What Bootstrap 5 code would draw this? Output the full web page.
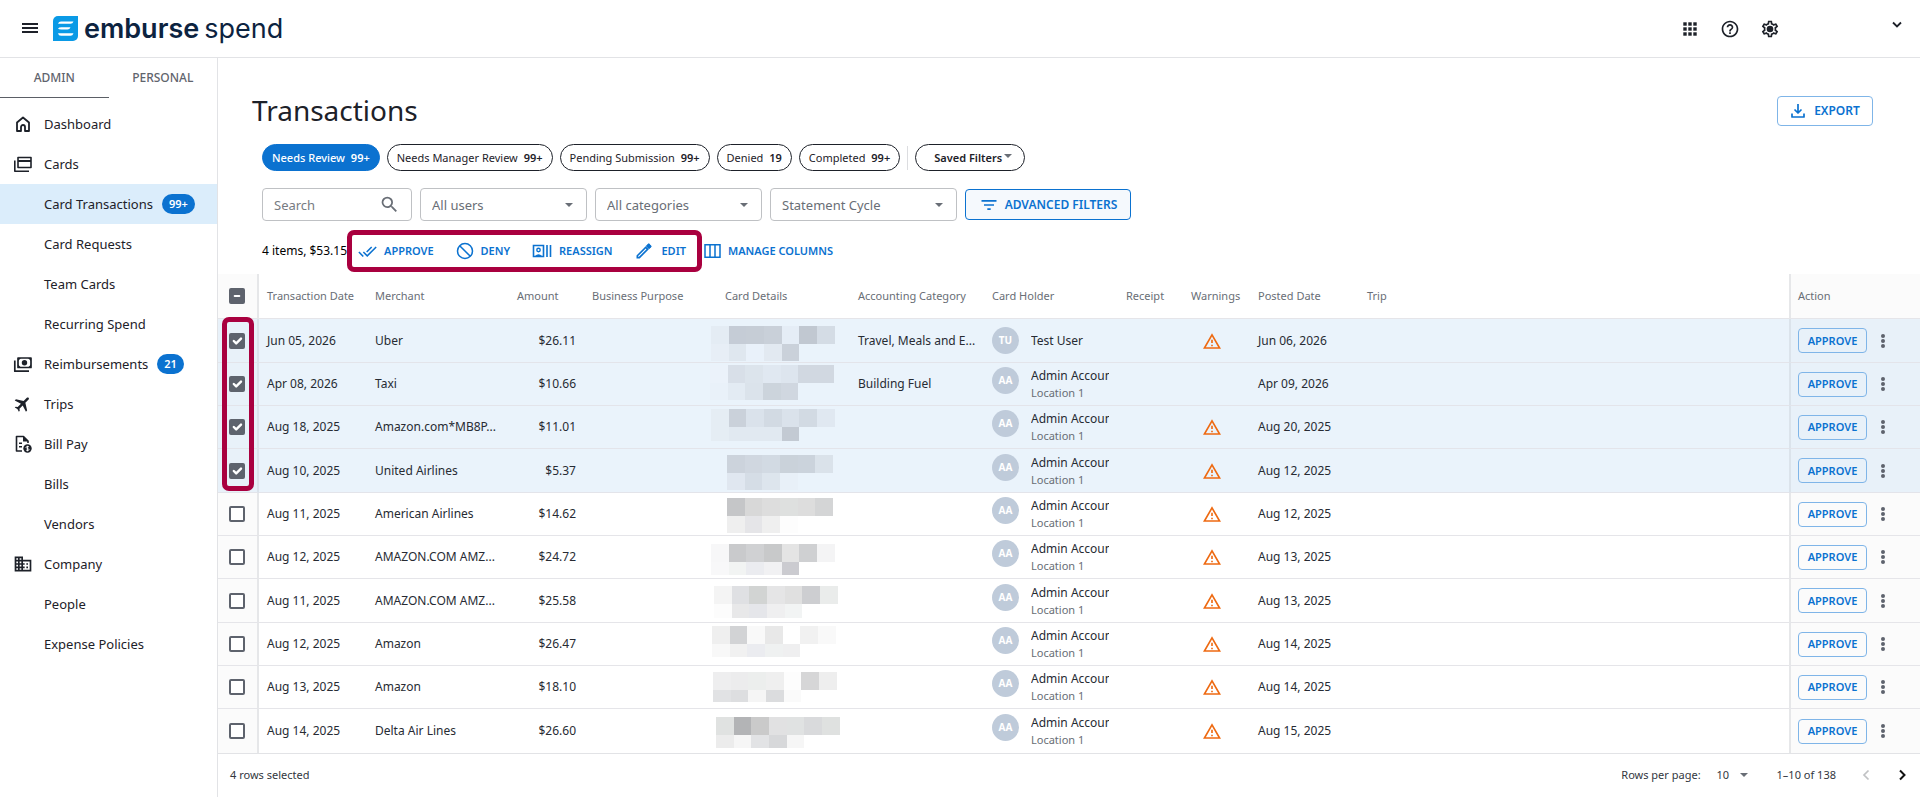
<!DOCTYPE html>
<html lang="en">
<head>
<meta charset="utf-8">
<meta name="viewport" content="width=device-width, initial-scale=1">
<title>Transactions - Emburse Spend</title>
<link rel="stylesheet" href="https://cdn.jsdelivr.net/npm/bootstrap@5.3.0/dist/css/bootstrap.min.css">
<style>
  :root { --brand: #0b72d0; --ink: #1d2129; --muted: #696e76; --rule: #e2e3e6; --mark: #a9003f; }
  body { font-family: "Noto Sans", sans-serif; font-size: 13px; line-height: 20px; color: var(--ink); background: #fff; }
  svg { display: block; flex: none; fill: currentColor; }
  .icon-btn { padding: 0; border: 0; background: none; color: inherit; }

  .app-bar { height: 58px; border-bottom: 1px solid var(--rule); padding: 0 17px 0 20px; }
  .wordmark { font-family: Inter, sans-serif; font-size: 27px; line-height: 32px; color: #0c2340; gap: 5px; margin-left: 6px; }
  .tools { gap: 20px; margin-right: 111px; }

  .side { width: 218px; border-right: 1px solid var(--rule); flex: none; }
  .side-tabs { height: 40px; margin-bottom: 6px; }
  .side-tabs a { font-size: 12px; font-weight: 500; color: #5f646d; border-bottom: 1px solid transparent; }
  .side-tabs a.active { border-color: #5b5f66; }
  .side-link { height: 40px; padding-left: 13px; color: var(--ink); text-decoration: none; }
  .side-link svg, .side-link .no-icon { width: 20px; height: 20px; margin-right: 11px; flex: none; }
  .side-link.active { background: #dbedfb; }
  .count { background: var(--brand); color: #fff; font-size: 11px; font-weight: 600; line-height: 20px; border-radius: 10px; padding: 0 7px; margin-left: 9px; }

  .top-area { padding: 37px 47px 0 44px; }
  h1 { font-size: 28px; line-height: 31px; font-weight: 400; margin: 0 0 0 -10px; }
  .action-btn { color: var(--brand); border: 1px solid #7fb5e8; border-radius: 4px; background: none; font-weight: 600; font-size: 12px; display: inline-flex; align-items: center; justify-content: center; padding: 0; }
  .btn-export { height: 30px; width: 96px; gap: 8px; }
  .btn-adv { height: 31px; width: 166px; gap: 6px; font-size: 12px; background: #f5f9fd; border-color: var(--brand); }
  .btn-row { height: 25px; width: 69px; font-size: 11px; }

  .chips { gap: 7px; margin-top: 18px; }
  .chip { height: 27px; border: 1px solid #1d2129; border-radius: 14px; background: #fff; font-size: 11px; line-height: 16px; padding: 0 9px; color: var(--ink); white-space: nowrap; }
  .chip b { font-weight: 600; margin-left: 3px; }
  .chip.active { background: var(--brand); border-color: var(--brand); color: #fff; font-weight: 500; }
  .chip-rule { width: 1px; height: 24px; background: #dcdde0; }
  select.chip { appearance: none; font-weight: 600; width: 110px; padding: 0 0 0 18px;
    background: #fff url("data:image/svg+xml,%3Csvg xmlns='http://www.w3.org/2000/svg' viewBox='0 0 8 4'%3E%3Cpath fill='%23696e76' d='M0 0h8L4 4z'/%3E%3C/svg%3E") no-repeat right 12px top 9px / 8px 4px; }

  .filters { gap: 8px; margin-top: 17px; }
  .field { height: 33px; border: 1px solid #bfc1c4; border-radius: 4px; font-size: 13px; color: var(--muted); padding: 0 11px; background-color: #fff; }
  .field input { border: 0; outline: 0; width: 100%; min-width: 0; padding: 0; color: inherit; }
  .field input::placeholder { color: #777b82; opacity: 1; }
  .caret { appearance: none; background-image: url("data:image/svg+xml,%3Csvg xmlns='http://www.w3.org/2000/svg' viewBox='0 0 8 4'%3E%3Cpath fill='%23696e76' d='M0 0h8L4 4z'/%3E%3C/svg%3E"); background-repeat: no-repeat; background-position: right 13px center; background-size: 8px 4px; }
  .w-search { width: 150px; } .w-pick { width: 167px; } .w-cycle { width: 187px; }

  .bulk { margin: 9px 0 2px; gap: 2px; }
  .bulk-sum { font-size: 12px; color: #000; width: 83px; white-space: nowrap; }
  .marked { border: 5px solid var(--mark); border-radius: 7px; height: 42px; width: 355px; padding: 0 11px 0 6px; }
  .bulk .tool { color: var(--brand); border: 0; background: none; padding: 0; font-size: 11px; font-weight: 600; line-height: 16px; gap: 7px; display: inline-flex; align-items: center; white-space: nowrap; }

  .grid-wrap { position: relative; border-bottom: 1px solid var(--rule); }
  .grid { width: 100%; table-layout: fixed; border-collapse: separate; border-spacing: 0; font-size: 12px; line-height: 18px; color: #272b33; }
  .grid th { height: 45px; font-size: 11px; font-weight: 400; color: var(--muted); }
  .grid th, .grid td { padding: 0 8px; border-bottom: 1px solid #e5e5e9; white-space: nowrap; overflow: hidden; }
  .grid td { height: 43px; }
  .grid tbody tr:nth-child(3n+1) td { height: 44px; }
  .grid tbody tr:last-child td { border-bottom: 0; }
  .grid .pin-l { background: #fbfbfb; border-right: 2px solid #e6e7e9; padding: 0 0 0 11px; }
  .grid .pin-r { background: #fbfbfb; border-left: 2px solid #e6e7e9; padding-left: 7px; }
  .grid tr.picked td { background: #eaf3fb; border-bottom-color: #e3e4ea; }
  .grid tr.picked td.pin-l, .grid tr.picked td.pin-r { background: #e8f1f9; border-left-color: #dbe3eb; border-right-color: #dbe3eb; }
  .grid td.redacted { padding: 0; overflow: visible; }
  .redacted svg { width: 100%; height: 42px; overflow: visible; }
  .grid .form-check-input { display: block; margin: 0; width: 16px; height: 16px; border: 2px solid #5e636d; border-radius: 2px; box-shadow: none; }
  .grid .form-check-input:checked, .grid .form-check-input:indeterminate { background-color: #5e636d; border-color: #5e636d; }
  .grid .form-check-input:checked { background-size: 16px 16px; }
  .avatar { width: 27px; height: 27px; border-radius: 50%; background: #bfcbda; color: #fff; font-size: 10px; font-weight: 700; line-height: 27px; text-align: center; flex: none; margin-right: 12px; }
  .holder { width: 78px; overflow: hidden; }
  .holder .place { font-size: 11px; line-height: 16px; color: var(--muted); }
  .warn { color: #ee6a12; margin-left: 12px; }
  .kebab { margin-left: 14px; color: #5e636d; }
  .mark-checks { position: absolute; left: 4px; top: 43px; width: 32px; height: 174px; border: 5px solid var(--mark); border-radius: 7px; pointer-events: none; }

  .foot { height: 42px; padding: 0 12px; font-size: 11px; color: #33373e; }
  .foot select { border: 0; width: 44px; padding: 0; font-size: 11px; color: inherit; background-color: transparent; background-position: right 13px center; }
</style>
</head>
<body class="d-flex flex-column min-vh-100">

<svg width="0" height="0" class="position-absolute" aria-hidden="true">
  <symbol id="i-kebab" viewBox="0 0 4 14"><circle cx="2" cy="2" r="2"/><circle cx="2" cy="7" r="2"/><circle cx="2" cy="12" r="2"/></symbol>
  <symbol id="i-warn" viewBox="1 2 22 19"><path d="M12 5.99L19.53 19H4.47L12 5.99M12 2L1 21h22L12 2zm1 14h-2v2h2v-2zm0-6h-2v4h2v-4z"/></symbol>
</svg>

<header class="app-bar d-flex align-items-center">
  <button class="icon-btn" aria-label="Menu"><svg width="24" height="24" viewBox="0 0 24 24"><path d="M2 6h16v2H2zM2 10h16v2H2zM2 14h16v2H2z"/></svg></button>
  <a href="#" class="d-flex align-items-center text-decoration-none ms-2" aria-label="Emburse Spend">
    <svg width="26" height="26" viewBox="0 0 26 26"><path fill="#0a9ae6" d="M6 0h20v20a5 5 0 0 1-5 5H1V5a5 5 0 0 1 5-5z"/><path fill="#fff" d="M9 5.500h12.500q-.8 2.300-3 2.300H6q.7-2.300 3-2.300zM9.500 11.300h9q-.8 2.300-3 2.300h-6q-3 0-3.500-1 1-1.300 3.500-1.300zM6 17.200h15.500q-.8 2.500-3 2.500H9q-2.500 0-3-2.500z"/></svg>
    <span class="wordmark d-flex"><span class="fw-semibold">emburse</span><span>spend</span></span>
  </a>
  <div class="tools d-flex align-items-center ms-auto">
    <button class="icon-btn" aria-label="Apps"><svg width="20" height="20" viewBox="0 0 20 20"><path d="M3 3h4v4H3zM8 3h4v4H8zM13 3h4v4h-4zM3 8h4v4H3zM8 8h4v4H8zM13 8h4v4h-4zM3 13h4v4H3zM8 13h4v4H8zM13 13h4v4h-4z" stroke="#fff" stroke-width=".6"/></svg></button>
    <button class="icon-btn" aria-label="Help"><svg width="20" height="20" viewBox="0 0 24 24"><path d="M11 18h2v-2h-2v2zm1-16C6.480 2 2 6.480 2 12s4.480 10 10 10 10-4.480 10-10S17.520 2 12 2zm0 18c-4.410 0-8-3.590-8-8s3.590-8 8-8 8 3.590 8 8-3.590 8-8 8zm0-14c-2.210 0-4 1.790-4 4h2c0-1.100.9-2 2-2s2 .9 2 2c0 2-3 1.750-3 5h2c0-2.250 3-2.500 3-5 0-2.210-1.790-4-4-4z"/></svg></button>
    <button class="icon-btn" aria-label="Settings"><svg width="20" height="20" viewBox="0 0 24 24"><path d="M19.430 12.980c.04-.32.07-.64.07-.98 0-.34-.03-.66-.07-.98l2.110-1.650c.19-.15.24-.42.12-.64l-2-3.460c-.09-.16-.26-.25-.44-.25-.06 0-.12.010-.17.030l-2.490 1c-.52-.4-1.080-.73-1.690-.98l-.38-2.650C14.460 2.180 14.250 2 14 2h-4c-.25 0-.46.18-.49.42l-.38 2.650c-.61.25-1.170.59-1.690.98l-2.490-1c-.06-.02-.12-.03-.18-.03-.17 0-.34.09-.43.25l-2 3.460c-.13.22-.07.49.12.64l2.110 1.650c-.04.32-.07.65-.07.98 0 .33.030.66.07.98l-2.110 1.650c-.19.15-.24.42-.12.64l2 3.460c.09.16.26.25.44.25.06 0 .12-.01.17-.03l2.490-1c.52.4 1.080.73 1.690.98l.38 2.650c.03.24.24.42.49.42h4c.25 0 .46-.18.49-.42l.38-2.650c.61-.25 1.170-.59 1.690-.98l2.490 1c.06.02.12.030.18.030.17 0 .34-.09.43-.25l2-3.460c.12-.22.07-.49-.12-.64l-2.110-1.650zm-1.980-1.710c.04.31.05.52.05.73 0 .21-.02.43-.05.73l-.14 1.130.89.7 1.080.84-.7 1.210-1.270-.51-1.040-.42-.9.68c-.43.32-.84.56-1.250.73l-1.060.43-.16 1.130-.2 1.350h-1.400l-.19-1.350-.16-1.130-1.060-.43c-.43-.18-.83-.41-1.230-.71l-.91-.7-1.060.43-1.270.51-.7-1.210 1.080-.84.89-.7-.14-1.130c-.03-.31-.05-.54-.05-.74s.02-.43.05-.73l.14-1.130-.89-.7-1.080-.84.7-1.210 1.270.51 1.040.42.9-.68c.43-.32.84-.56 1.250-.73l1.060-.43.16-1.130.2-1.350h1.390l.19 1.350.16 1.130 1.060.43c.43.18.83.41 1.230.71l.91.7 1.060-.43 1.270-.51.7 1.210-1.070.85-.89.7.14 1.130z"/><circle cx="12" cy="12" r="4"/></svg></button>
  </div>
  <button class="icon-btn mb-2" aria-label="Account menu"><svg width="12" height="8" viewBox="0 0 12 8"><path d="M2 1.500l4 4 4-4" fill="none" stroke="currentColor" stroke-width="1.800"/></svg></button>
</header>

<div class="d-flex flex-grow-1">
  <aside class="side">
    <nav class="side-tabs d-flex">
      <a href="#" class="active w-50 d-flex align-items-center justify-content-center text-decoration-none">ADMIN</a>
      <a href="#" class="w-50 d-flex align-items-center justify-content-center text-decoration-none">PERSONAL</a>
    </nav>
    <nav>
      <a href="#" class="side-link d-flex align-items-center"><svg viewBox="0 0 20 20"><path d="M4 8.500l6-5 6 5v8.500h-4v-4a2 2 0 0 0-4 0v4H4z" fill="none" stroke="currentColor" stroke-width="1.800" stroke-linejoin="round"/></svg>Dashboard</a>
      <a href="#" class="side-link d-flex align-items-center"><svg viewBox="0 0 20 20"><path d="M5 3.500h13v10H5zM1.800 6.500v10.700H16" fill="none" stroke="currentColor" stroke-width="1.600" stroke-linejoin="round"/><path d="M5 6h13v2H5z"/></svg>Cards</a>
      <a href="#" class="side-link active d-flex align-items-center"><span class="no-icon"></span>Card Transactions<span class="count">99+</span></a>
      <a href="#" class="side-link d-flex align-items-center"><span class="no-icon"></span>Card Requests</a>
      <a href="#" class="side-link d-flex align-items-center"><span class="no-icon"></span>Team Cards</a>
      <a href="#" class="side-link d-flex align-items-center"><span class="no-icon"></span>Recurring Spend</a>
      <a href="#" class="side-link d-flex align-items-center"><svg viewBox="0 0 20 20"><path d="M5 4h13v9.500H5zM1.800 6.500v10.700H16" fill="none" stroke="currentColor" stroke-width="1.700" stroke-linejoin="round"/><circle cx="11.500" cy="8.800" r="2.700"/><path d="M5 4h3L5 7zM18 4v3l-3-3zM5 13.500v-3l3 3zM18 13.500h-3l3-3z"/></svg>Reimbursements<span class="count">21</span></a>
      <a href="#" class="side-link d-flex align-items-center"><svg viewBox="0 0 24 24"><path transform="rotate(45 12 12)" d="M21 16v-2l-8-5V3.500c0-.83-.67-1.500-1.500-1.500S10 2.670 10 3.500V9l-8 5v2l8-2.500V19l-2 1.500V22l3.500-1 3.500 1v-1.500L13 19v-5.500l8 2.500z"/></svg>Trips</a>
      <a href="#" class="side-link d-flex align-items-center"><svg viewBox="0 0 20 20"><path d="M9 17H3.500V2.500h7L15 7v2" fill="none" stroke="currentColor" stroke-width="1.600" stroke-linejoin="round"/><path d="M10 2l5.500 5.500H10zM6 8.500h3V10H6zM6 12h3v1.500H6z"/><circle cx="14.500" cy="14.500" r="4.200"/><path d="M16 12.800q-3-1-3 .5c0 1.300 3 1 3 2.300 0 1.200-2 1-3 .4M14.500 11.800v5.500" fill="none" stroke="#fff" stroke-width=".9"/></svg>Bill Pay</a>
      <a href="#" class="side-link d-flex align-items-center"><span class="no-icon"></span>Bills</a>
      <a href="#" class="side-link d-flex align-items-center"><span class="no-icon"></span>Vendors</a>
      <a href="#" class="side-link d-flex align-items-center"><svg viewBox="0 0 24 24"><path d="M12 7V3H2v18h20V7H12zM6 19H4v-2h2v2zm0-4H4v-2h2v2zm0-4H4V9h2v2zm0-4H4V5h2v2zm4 12H8v-2h2v2zm0-4H8v-2h2v2zm0-4H8V9h2v2zm0-4H8V5h2v2zm10 12h-8v-2h2v-2h-2v-2h2v-2h-2V9h8v10zm-2-8h-2v2h2v-2zm0 4h-2v2h2v-2z"/></svg>Company</a>
      <a href="#" class="side-link d-flex align-items-center"><span class="no-icon"></span>People</a>
      <a href="#" class="side-link d-flex align-items-center"><span class="no-icon"></span>Expense Policies</a>
    </nav>
  </aside>

  <main class="flex-grow-1 overflow-hidden">
    <div class="top-area">
      <div class="d-flex align-items-center justify-content-between">
        <h1>Transactions</h1>
        <button class="action-btn btn-export"><svg width="16" height="16" viewBox="0 0 16 16"><path d="M8 1v8.500M4.500 6.500L8 10l3.500-3.500M2 10.500V14h12v-3.500" fill="none" stroke="currentColor" stroke-width="1.700" stroke-linejoin="round"/></svg>EXPORT</button>
      </div>

      <div class="chips d-flex align-items-center">
        <button class="chip active">Needs Review <b>99+</b></button>
        <button class="chip">Needs Manager Review <b>99+</b></button>
        <button class="chip">Pending Submission <b>99+</b></button>
        <button class="chip">Denied <b>19</b></button>
        <button class="chip">Completed <b>99+</b></button>
        <span class="chip-rule"></span>
        <select class="chip" aria-label="Saved Filters"><option>Saved Filters</option></select>
      </div>

      <div class="filters d-flex align-items-center">
        <label class="field w-search d-flex align-items-center"><input type="text" placeholder="Search" aria-label="Search"><svg width="21" height="21" viewBox="0 0 24 24"><path d="M15.500 14h-.79l-.28-.27A6.471 6.471 0 0016 9.500 6.500 6.500 0 109.500 16c1.610 0 3.090-.59 4.230-1.570l.27.28v.79l5 4.990L20.490 19l-4.990-5zm-6 0C7.010 14 5 11.990 5 9.500S7.010 5 9.500 5 14 7.010 14 9.500 11.990 14 9.500 14z"/></svg></label>
        <select class="field caret w-pick" aria-label="Users"><option>All users</option></select>
        <select class="field caret w-pick" aria-label="Categories"><option>All categories</option></select>
        <select class="field caret w-cycle" aria-label="Statement Cycle"><option>Statement Cycle</option></select>
        <button class="action-btn btn-adv"><svg width="20" height="20" viewBox="0 0 24 24"><path d="M10 18h4v-2h-4v2zM3 6v2h18V6H3zm3 7h12v-2H6v2z"/></svg>ADVANCED FILTERS</button>
      </div>

      <div class="bulk d-flex align-items-center">
        <span class="bulk-sum">4 items, $53.15</span>
        <div class="marked d-flex align-items-center justify-content-between">
          <button class="tool"><svg width="19" height="19" viewBox="0 0 24 24"><path d="M18 7l-1.410-1.410-6.340 6.340 1.410 1.410L18 7zm4.240-1.410L11.660 16.170 7.480 12l-1.410 1.410L11.660 19l12-12-1.420-1.410zM.41 13.410L6 19l1.410-1.410L1.830 12 .41 13.410z"/></svg>APPROVE</button>
          <button class="tool"><svg width="18" height="18" viewBox="0 0 18 18"><path d="M9 1.500a7.500 7.500 0 1 0 0 15 7.500 7.500 0 0 0 0-15zM3.700 3.700l10.600 10.600" fill="none" stroke="currentColor" stroke-width="1.500"/></svg>DENY</button>
          <button class="tool"><svg width="20" height="16" viewBox="0 0 20 16"><path d="M1.500 2.500h10v11h-10zM15 2v12M18.500 2v12" fill="none" stroke="currentColor" stroke-width="1.600"/><circle cx="6.500" cy="7" r="1.700" fill="none" stroke="currentColor" stroke-width="1.400"/><path d="M3 13q3.500-3.500 7 0z"/></svg>REASSIGN</button>
          <button class="tool"><svg width="20" height="20" viewBox="0 0 24 24"><path d="M14.060 9.020l.92.92L5.920 19H5v-.92l9.060-9.060M17.660 3c-.25 0-.51.1-.7.29l-1.830 1.830 3.750 3.750 1.830-1.830c.39-.39.39-1.020 0-1.410l-2.340-2.340c-.2-.2-.45-.29-.71-.29zm-3.600 3.190L3 17.250V21h3.750L17.810 9.940l-3.750-3.750z"/><path d="M14 6l4 4 3-3-3-4z"/></svg>EDIT</button>
        </div>
        <button class="tool"><svg width="17" height="16" viewBox="0 0 17 16"><path d="M1 1.800h15v12.400H1zM6 2v12M11 2v12" fill="none" stroke="currentColor" stroke-width="1.500"/></svg>MANAGE COLUMNS</button>
      </div>
    </div>

    <div class="grid-wrap">
      <table class="grid">
        <colgroup><col width="41"><col width="108"><col width="142"><col width="75"><col width="133"><col width="133"><col width="134"><col width="134"><col width="65"><col width="67"><col width="109"><col><col width="131"></colgroup>
        <thead>
          <tr>
            <th class="pin-l"><input class="form-check-input" type="checkbox" id="pick-all" aria-label="Select all rows"></th>
            <th>Transaction Date</th><th>Merchant</th><th>Amount</th><th>Business Purpose</th><th>Card Details</th><th>Accounting Category</th><th>Card Holder</th><th>Receipt</th><th>Warnings</th><th>Posted Date</th><th>Trip</th><th class="pin-r">Action</th>
          </tr>
        </thead>
        <tbody id="rows"></tbody>
      </table>
      <div class="mark-checks"></div>
    </div>

    <div class="foot d-flex align-items-center">
      <span class="me-auto">4 rows selected</span>
      <label for="page-size" class="me-3">Rows per page:</label>
      <select id="page-size" class="caret me-3"><option>10</option></select>
      <span class="me-4">1–10 of 138</span>
      <button class="icon-btn me-4" aria-label="Previous page" disabled><svg width="12" height="12" viewBox="0 0 12 12" opacity=".3"><path d="M8.500 1.500L4 6l4.500 4.500" fill="none" stroke="currentColor" stroke-width="1.700"/></svg></button>
      <button class="icon-btn" aria-label="Next page"><svg width="12" height="12" viewBox="0 0 12 12"><path d="M4 1.500L8.500 6 4 10.500" fill="none" stroke="#111" stroke-width="2"/></svg></button>
    </div>
  </main>
</div>

<script src="https://cdn.jsdelivr.net/npm/bootstrap@5.3.0/dist/js/bootstrap.bundle.min.js"></script>
<script>
  // Redaction blocks: left, top, lower band height, upper colours, lower colours.
  const rows = [
    { on: 1, date: 'Jun 05, 2026', shop: 'Uber', sum: '$26.11', cat: 'Travel, Meals and E...', user: 'Test User', warn: 1, posted: 'Jun 06, 2026',
      mask: [-6, 6, 17, 'e4ecf4 c5ccd6 c6cdd6 c9d0d9 e5edf6 c1c8d1 d4dce5', 'e7eef6 dfe7ef e9f1fa e2e9f1 cad1da'] },
    { on: 1, date: 'Apr 08, 2026', shop: 'Taxi', sum: '$10.66', cat: 'Building Fuel', warn: 0, posted: 'Apr 09, 2026',
      mask: [-7, 2, 17, 'ebf2fa d8dfe8 dce4ec e0e8f1 dde5ee d1d8e1 d1d8e1', 'e9f1f9 e3ebf3 dbe3eb ccd4dc d0d7e0'] },
    { on: 1, date: 'Aug 18, 2025', shop: 'Amazon.com*MB8P...', sum: '$11.01', cat: '', warn: 1, posted: 'Aug 20, 2025',
      mask: [-6, 3, 14, 'e5edf4 cad1da dae2eb d2dae3 dae2eb d2dae3 e0e8f1', 'e5edf4 e1e9f1 e1e9f1 e1e9f1 c3cad3'] },
    { on: 1, date: 'Aug 10, 2025', shop: 'United Airlines', sum: '$5.37', cat: '', warn: 1, posted: 'Aug 12, 2025',
      mask: [10, 5, 17, 'ccd3dc d0d7e0 d2dae3 cad2da cbd3dc dae2ea', 'e0e7f0 d5dde6 dde5ed e8f0f8'] },
    { date: 'Aug 11, 2025', shop: 'American Airlines', sum: '$14.62', cat: '', warn: 1, posted: 'Aug 12, 2025',
      mask: [10, 5, 17, 'c5c6c8 d8d8d8 dddddd dee0df dddddd d4d5d6', 'efefef e5e5e8 efefef fdfdfd'] },
    { date: 'Aug 12, 2025', shop: 'AMAZON.COM AMZ...', sum: '$24.72', cat: '', warn: 1, posted: 'Aug 13, 2025',
      mask: [-6, 8, 13, 'f7f7f8 c9cacc d0d1d3 c8c9ca e4e4e4 cfd0d2 f4f4f5', 'f8f8f9 f2f4f3 ebecf0 f1f1f3 cbcbd0'] },
    { date: 'Aug 11, 2025', shop: 'AMAZON.COM AMZ...', sum: '$25.58', cat: '', warn: 1, posted: 'Aug 13, 2025',
      mask: [-3, 6, 14, 'f4f4f4 dfe0e3 d2d4d3 e5e5e6 e0e0e0 cdced1 eaeceb', 'fcfcfc e8e8e9 e5e6ea efeff0 f2f4f4'] },
    { date: 'Aug 12, 2025', shop: 'Amazon', sum: '$26.47', cat: '', warn: 1, posted: 'Aug 14, 2025',
      mask: [-5, 3, 13, 'efefef d2d3d5 f9f9f9 e8e8e8 ffffff f1f1f1 f9f9f9', 'f8f8f8 f1f1f1 ebecf0 eff1f1 efeff0'] },
    { date: 'Aug 13, 2025', shop: 'Amazon', sum: '$18.10', cat: '', warn: 1, posted: 'Aug 14, 2025',
      mask: [-4, 6, 12, 'eeeeef ececed eceeed efefef fdfdfd d6d6d7 eeeeee', 'e1e2e4 dddee0 f5f5f5 dbdcde fafafa'] },
    { date: 'Aug 14, 2025', shop: 'Delta Air Lines', sum: '$26.60', cat: '', warn: 1, posted: 'Aug 15, 2025',
      mask: [-1, 7, 13, 'e0e2e1 b3b4b6 cacaca e1e1e2 e0e2e2 d9dadc dfe1e0', 'ececec f6f6f6 e2e3e5 d7d8da f6f6f6'] }
  ];
  const edge = i => Math.round(i * 53 / 3);
  const band = (colours, x, y, h) => colours.split(' ').map((c, i) =>
    `<rect x="${x + edge(i)}" y="${y}" width="${edge(i + 1) - edge(i)}" height="${h}" fill="#${c}"/>`).join('');
  const holder = r => r.user
    ? `<div class="d-flex align-items-center"><div class="avatar">TU</div><div class="holder">${r.user}</div></div>`
    : `<div class="d-flex align-items-start"><div class="avatar">AA</div><div class="holder"><div>Admin Account</div><div class="place">Location 1</div></div></div>`;
  document.getElementById('rows').innerHTML = rows.map((r, n) => `
    <tr class="${r.on ? 'picked' : ''}">
      <td class="pin-l"><input class="form-check-input" type="checkbox" aria-label="Select row ${n + 1}" ${r.on ? 'checked' : ''}></td>
      <td>${r.date}</td>
      <td>${r.shop}</td>
      <td class="text-end">${r.sum}</td>
      <td></td>
      <td class="redacted"><svg>${band(r.mask[3], r.mask[0], r.mask[1], 18)}${band(r.mask[4], r.mask[0], r.mask[1] + 18, r.mask[2])}</svg></td>
      <td>${r.cat}</td>
      <td>${holder(r)}</td>
      <td></td>
      <td>${r.warn ? '<svg class="warn" width="18" height="16" role="img" aria-label="Warning"><use href="#i-warn"/></svg>' : ''}</td>
      <td>${r.posted}</td>
      <td></td>
      <td class="pin-r"><div class="d-flex align-items-center"><button class="action-btn btn-row">APPROVE</button><button class="icon-btn kebab" aria-label="More actions"><svg width="4" height="14"><use href="#i-kebab"/></svg></button></div></td>
    </tr>`).join('');
  document.getElementById('pick-all').indeterminate = true;
</script>
</body>
</html>
